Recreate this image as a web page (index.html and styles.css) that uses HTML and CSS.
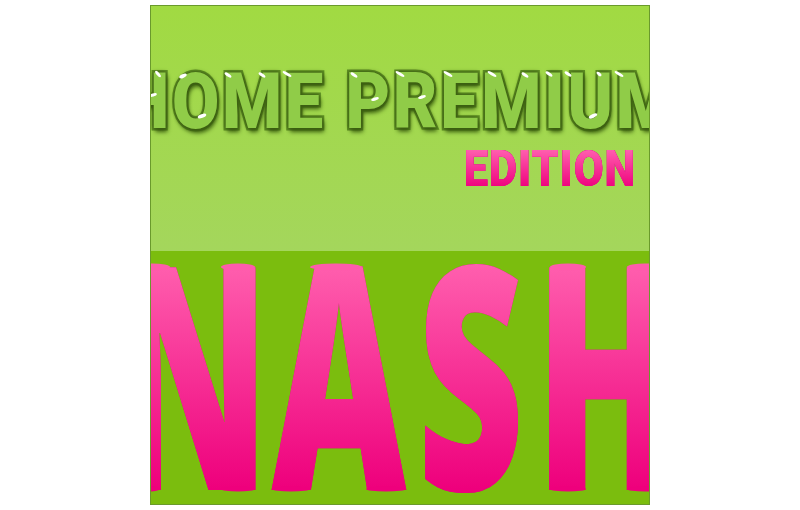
FILE: index.html
```html
<!DOCTYPE html>
<html lang="en">
<head>
    <meta charset="UTF-8">
    <title>Home Premium Edition Nash</title>
    <link rel="stylesheet" href="styles.css">
</head>
<body>
    <div class="cover">
        <div class="cover-top">
            <div class="title"><span>HOME PREMIUM</span></div>
            <div class="edition"><span>EDITION</span></div>
            <svg class="overlay" width="498" height="245" viewBox="151 6 498 245">
                <g fill="#fff">
                    <ellipse cx="158" cy="74" rx="4" ry="1.5" transform="rotate(50 158 74)"/>
                    <ellipse cx="183" cy="76" rx="4" ry="1.8" transform="rotate(-25 183 76)"/>
                    <ellipse cx="228" cy="75" rx="4" ry="1.5" transform="rotate(35 228 75)"/>
                    <ellipse cx="262" cy="75" rx="4" ry="1.5" transform="rotate(35 262 75)"/>
                    <ellipse cx="287" cy="74" rx="5" ry="1.5" transform="rotate(30 287 74)"/>
                    <ellipse cx="354" cy="75" rx="4" ry="1.5" transform="rotate(35 354 75)"/>
                    <ellipse cx="400" cy="74" rx="5" ry="1.5" transform="rotate(30 400 74)"/>
                    <ellipse cx="448" cy="74" rx="5" ry="1.5" transform="rotate(30 448 74)"/>
                    <ellipse cx="492" cy="74" rx="5" ry="1.5" transform="rotate(30 492 74)"/>
                    <ellipse cx="525" cy="75" rx="4" ry="1.5" transform="rotate(35 525 75)"/>
                    <ellipse cx="549" cy="74" rx="4" ry="1.5" transform="rotate(35 549 74)"/>
                    <ellipse cx="568" cy="74" rx="4" ry="1.5" transform="rotate(35 568 74)"/>
                    <ellipse cx="599" cy="74" rx="3" ry="1.5" transform="rotate(40 599 74)"/>
                    <ellipse cx="619" cy="74" rx="5" ry="1.5" transform="rotate(30 619 74)"/>
                    <ellipse cx="153" cy="95" rx="4" ry="1.5" transform="rotate(-15 153 95)"/>
                    <ellipse cx="202" cy="116" rx="4.5" ry="1.8" transform="rotate(-20 202 116)"/>
                    <ellipse cx="375" cy="99" rx="4" ry="1.5" transform="rotate(-20 375 99)"/>
                    <ellipse cx="422" cy="97" rx="4" ry="1.5" transform="rotate(-20 422 97)"/>
                    <ellipse cx="593" cy="116" rx="4.5" ry="1.8" transform="rotate(-25 593 116)"/>
                </g>
            </svg>
        </div>
        <div class="cover-bottom">
            <div class="name"><span>N<i class="wide">AS</i>H</span></div>
            <!-- the letters bulge a little at top and bottom -->
            <svg class="overlay" width="498" height="253" viewBox="151 251 498 253">
                <g fill="#fe5cab">
                    <ellipse cx="152" cy="267" rx="18" ry="3.5"/>
                    <ellipse cx="238" cy="267" rx="17" ry="3.5"/>
                    <ellipse cx="336" cy="267" rx="26" ry="3.5"/>
                    <ellipse cx="568" cy="267" rx="18" ry="3.5"/>
                    <ellipse cx="645" cy="267" rx="18" ry="3.5"/>
                </g>
                <g fill="#ee007c">
                    <ellipse cx="148" cy="489" rx="12" ry="2.5"/>
                    <ellipse cx="238" cy="489" rx="17" ry="2.5"/>
                    <ellipse cx="291" cy="489" rx="19" ry="2.5"/>
                    <ellipse cx="386" cy="489" rx="20" ry="2.5"/>
                    <ellipse cx="568" cy="489" rx="18" ry="2.5"/>
                    <ellipse cx="645" cy="489" rx="18" ry="2.5"/>
                </g>
            </svg>
        </div>
    </div>
</body>
</html>
```

FILE: styles.css
```css
* {
    margin: 0;
    padding: 0;
    box-sizing: border-box;
}

body {
    background-color: #fff;
    display: flex;
    justify-content: center;
    padding-top: 5px;
    height: 510px;
    overflow: hidden;
}

.cover {
    width: 500px;
    height: 500px;
    border: 1px solid #6a9a2c;
    overflow: hidden;
    display: flex;
    flex-direction: column;
}

.cover-top {
    position: relative;
    height: 245px;
    padding-top: 56px;
    background: linear-gradient(#a1da42, #a4d65c);
    overflow: hidden;
}

.title {
    display: flex;
    justify-content: center;
    height: 80px;
    line-height: 80px;
    white-space: nowrap;
}

.title span {
    flex: none;
    font-family: "Roboto", "Liberation Sans", sans-serif;
    font-weight: 900;
    font-size: 78px;
    letter-spacing: 3px;
    color: #90cc48;
    -webkit-text-stroke: 5px #5f8f25;
    paint-order: stroke fill;
    transform: scaleX(0.88);
    text-shadow: 0 0 3px #3c5f12, 0 0 5px #3c5f12, 2px 4px 5px #3c5f12;
}

.edition {
    display: flex;
    justify-content: flex-end;
    padding-right: 13px;
    margin-top: 8px;
    height: 38px;
    white-space: nowrap;
}

.edition span {
    flex: none;
    font-family: "Roboto", "Liberation Sans", sans-serif;
    font-weight: 900;
    font-size: 50px;
    line-height: 38px;
    letter-spacing: 1px;
    transform: scaleX(0.87);
    transform-origin: right center;
    background: linear-gradient(#ff5fae, #ee007c);
    -webkit-background-clip: text;
    background-clip: text;
    -webkit-text-fill-color: transparent;
    filter: drop-shadow(0 0 0.6px #d81c88) drop-shadow(0 0 0.6px #d81c88);
}

.overlay {
    position: absolute;
    left: 0;
    top: 0;
}

.cover-bottom {
    position: relative;
    flex: 1;
    background-color: #7bbd0e;
    padding-top: 5px;
    overflow: hidden;
}

.name {
    display: flex;
    justify-content: center;
    height: 232px;
    white-space: nowrap;
}

.name span {
    flex: none;
    font-family: "Open Sans", "Liberation Sans", sans-serif;
    font-weight: 800;
    font-size: 312px;
    line-height: 340px;
    margin-top: -57px;
    margin-right: 6px;
    height: 340px;
    letter-spacing: 3px;
    transform: scaleX(0.595);
    background: linear-gradient(#ff5fae 65px, #ee007c 290px);
    -webkit-background-clip: text;
    background-clip: text;
    -webkit-text-fill-color: transparent;
    filter: drop-shadow(0 0 0.5px #c8107c);
}

.name .wide {
    font-style: normal;
    letter-spacing: 18px;
}
```
